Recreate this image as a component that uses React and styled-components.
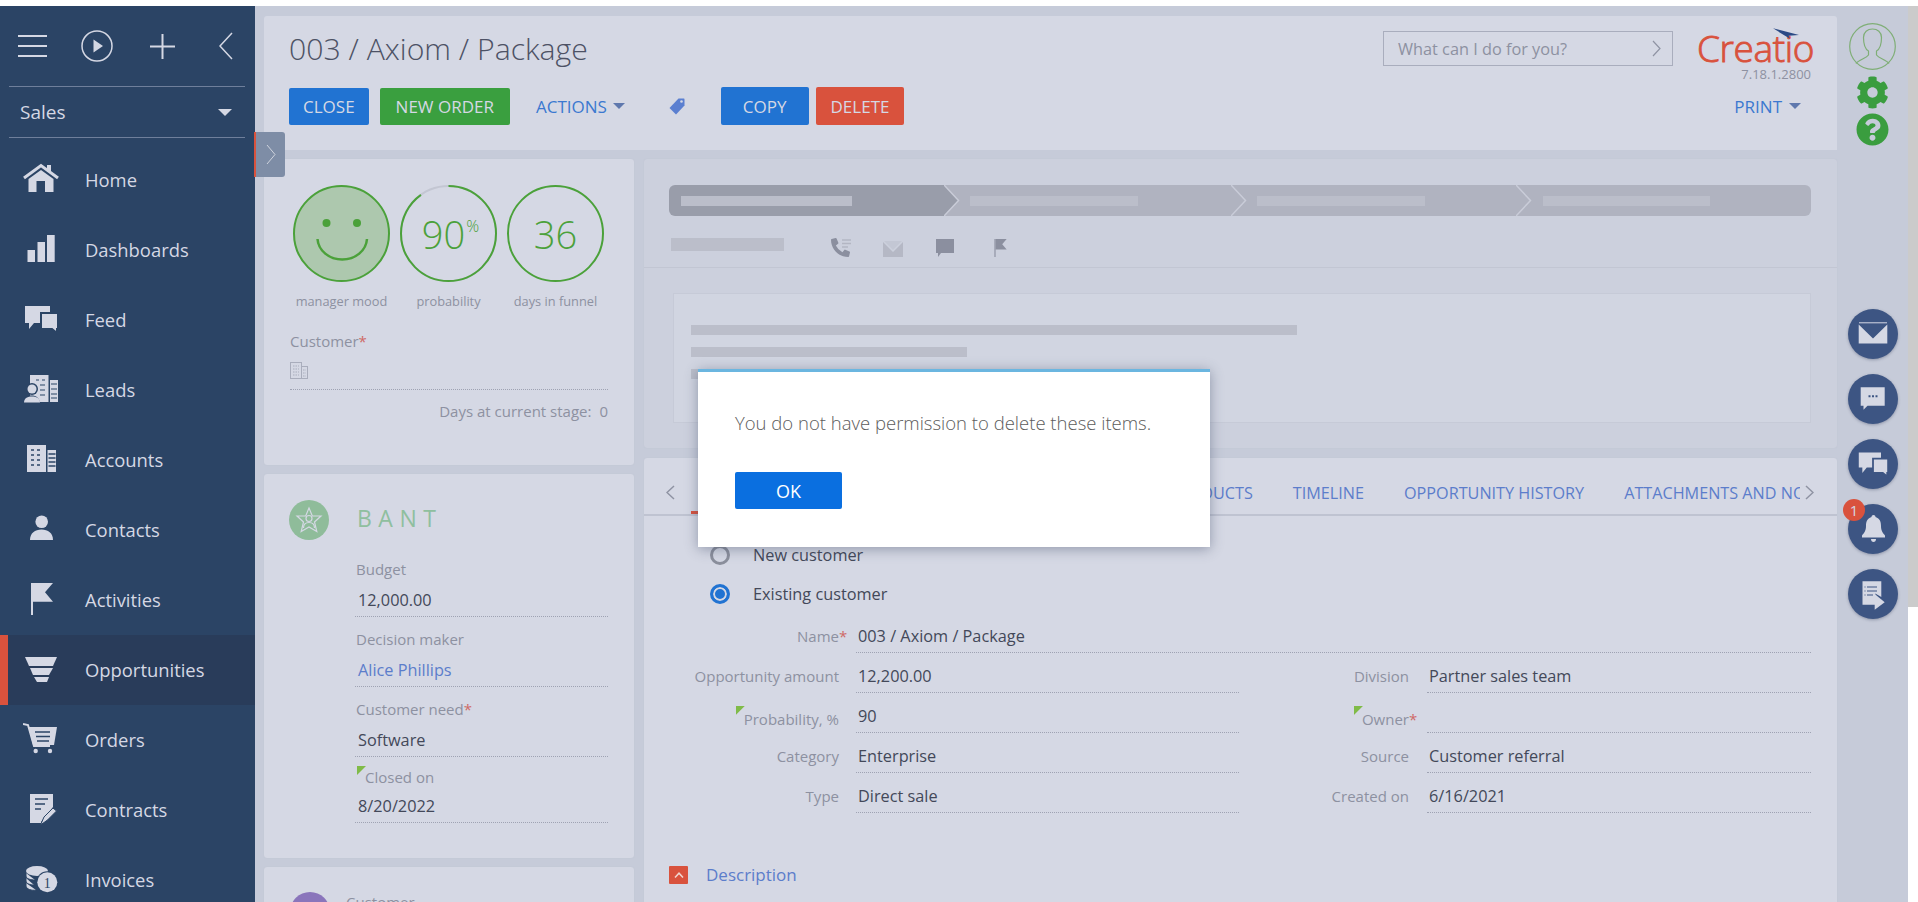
import React from "react";
import styled, { createGlobalStyle } from "styled-components";
import { FaCog, FaQuestionCircle, FaPhoneAlt } from "react-icons/fa";

const GlobalStyle = createGlobalStyle`
  html, body { margin: 0; padding: 0; background: #fff; }
  body { font-family: "Open Sans", sans-serif; }
  * { box-sizing: border-box; }
`;

const panel = "#d5d8e4";
const strip = "#c6cbd9";
const navy = "#2b4465";
const red = "#d9523d";
const green = "#4ba13a";
const link = "#5c7dcb";
const muted = "#8d91a1";
const ink = "#434859";
const railBlue = "#3d5583";

const Stage = styled.div`
  width: 1918px;
  height: 902px;
  padding-top: 6px;
  display: flex;
  align-items: flex-start;
  overflow: hidden;
  position: relative;
  background: #fff;
`;

/* left menu */
const Sidebar = styled.aside`
  width: 255px;
  height: 896px;
  flex: none;
  background: ${navy};
  overflow: hidden;
`;
const SideTools = styled.div`
  height: 80px;
  padding-left: 18px;
  display: flex;
  align-items: center;
  svg { flex: none; }
`;
const ToolSlot = styled.span`
  display: flex;
  margin-left: ${(p) => p.$ml}px;
`;
const SideSelect = styled.div`
  height: 52px;
  margin: 0 10px 0 9px;
  padding: 0 13px 0 11px;
  border-top: 1px solid #6f7f9b;
  border-bottom: 1px solid #6f7f9b;
  display: flex;
  align-items: center;
  justify-content: space-between;
  color: ${panel};
  font-size: 19px;
`;
const Caret = styled.span`
  width: 0;
  height: 0;
  margin-left: ${(p) => p.$gap || 0}px;
  border-left: ${(p) => p.$size || 6}px solid transparent;
  border-right: ${(p) => p.$size || 6}px solid transparent;
  border-top: ${(p) => p.$size || 6}px solid ${(p) => p.$color || "#5f78ad"};
`;
const Nav = styled.nav`
  margin-top: 7px;
`;
const NavRow = styled.div`
  height: 70px;
  padding: 0 0 2px 23px;
  display: flex;
  align-items: center;
  gap: 26px;
  color: ${panel};
  font-size: 18.4px;
  background: ${(p) => (p.$active ? "#293c5a" : "transparent")};
  box-shadow: ${(p) => (p.$active ? `inset 8px 0 0 ${red}` : "none")};
  svg { flex: none; }
`;
const CollapseTab = styled.div`
  position: absolute;
  left: 254px;
  top: 132px;
  width: 31px;
  height: 45px;
  background: #7e8da6;
  border-left: 2px solid ${red};
  border-radius: 0 3px 3px 0;
  display: flex;
  align-items: center;
  justify-content: center;
`;

/* main part */
const Content = styled.div`
  flex: 1;
  height: 896px;
  display: flex;
  background: ${strip};
  overflow: hidden;
`;
const ScrollStrip = styled.div`
  width: 10px;
  height: 601px;
  flex: none;
  background: #cbcbcb;
`;
const Work = styled.main`
  flex: 1;
  padding: 10px 0 0 9px;
  display: flex;
  flex-direction: column;
  gap: 9px;
  min-width: 0;
`;
const HeaderPanel = styled.header`
  height: 134px;
  flex: none;
  padding: 0 26px 0 25px;
  background: ${panel};
  border-radius: 3px 3px 0 0;
`;
const TopRow = styled.div`
  height: 71px;
  display: flex;
  align-items: flex-start;
`;
const Title = styled.h1`
  margin: 15px auto 0 0;
  font-size: 30.2px;
  font-weight: 300;
  line-height: 36px;
  color: #4d5265;
`;
const Search = styled.div`
  width: 290px;
  height: 35px;
  margin-top: 15px;
  padding: 0 11px 0 14px;
  border: 1px solid #a9adbd;
  display: flex;
  align-items: center;
  justify-content: space-between;
  color: ${muted};
  font-size: 16.3px;
`;
const LogoBlock = styled.div`
  width: 112px;
  margin-left: 26px;
  position: relative;
  text-align: right;
`;
const LogoWord = styled.div`
  margin: 14px 0 0 -2px;
  height: 36px;
  font-size: 37px;
  font-weight: 300;
  line-height: 36px;
  letter-spacing: -0.4px;
  color: ${red};
  text-align: left;
  white-space: nowrap;
  -webkit-text-stroke: 0.9px ${red};
`;
const LogoArrow = styled.svg`
  position: absolute;
  left: 74px;
  top: 12px;
`;
const Version = styled.div`
  font-size: 13px;
  line-height: 16px;
  color: ${muted};
`;
const Toolbar = styled.div`
  display: flex;
  align-items: center;
`;
const Btn = styled.button`
  height: ${(p) => p.$h || 37}px;
  margin-left: ${(p) => p.$ml || 0}px;
  padding: 0 ${(p) => p.$pad || 14}px;
  border: 0;
  border-radius: 2px;
  background: ${(p) => p.$bg};
  color: ${panel};
  font: 17px "Open Sans", sans-serif;
`;
const TextMenu = styled.div`
  margin-left: ${(p) => (p.$end ? "auto" : `${p.$ml}px`)};
  margin-right: ${(p) => (p.$end ? 10 : 0)}px;
  display: flex;
  align-items: center;
  color: #3b78d0;
  font-size: 17px;
`;
const TagSlot = styled.div`
  height: 17px;
  margin: 0 36px 0 44px;
`;

const Columns = styled.div`
  flex: 1;
  display: grid;
  grid-template-columns: 370px 1fr;
  column-gap: 10px;
  min-height: 0;
`;
const Stack = styled.div`
  display: flex;
  flex-direction: column;
  gap: ${(p) => p.$gap}px;
  min-width: 0;
`;
const Card = styled.section`
  flex: ${(p) => (p.$h ? "none" : 1)};
  height: ${(p) => (p.$h ? `${p.$h}px` : "auto")};
  padding: ${(p) => p.$pad || 0};
  background: ${(p) => p.$bg || panel};
  border-radius: 3px;
  box-shadow: 0 0 1px #b9bdcb;
`;

/* gauges */
const Gauges = styled.div`
  margin: 0 0 22px 3px;
  display: flex;
  gap: 10px;
`;
const Gauge = styled.div`
  width: 97px;
  text-align: center;
  font-size: 12.8px;
  line-height: 16px;
  color: ${muted};
  white-space: nowrap;
`;
const Ring = styled.div`
  width: 97px;
  height: 97px;
  margin-bottom: 11px;
  position: relative;
  display: flex;
  align-items: center;
  justify-content: center;
  svg { position: absolute; left: 0; top: 0; }
`;
const Num = styled.span`
  position: relative;
  margin-right: ${(p) => p.$shift || 0}px;
  font-size: 38px;
  font-weight: 300;
  line-height: 1;
  color: ${green};
  sup {
    position: absolute;
    left: 100%;
    top: 3px;
    margin-left: 1px;
    font-size: 16px;
    line-height: 1;
  }
`;
const Label = styled.div`
  font-size: 15px;
  line-height: 20px;
  color: ${muted};
  white-space: nowrap;
`;
const Star = styled.span`
  color: #cf6a66;
`;
const Lookup = styled.div`
  height: 28px;
  margin-top: 11px;
  border-bottom: 1px dotted #9fa3b3;
`;
const DaysRow = styled.div`
  margin-top: 11px;
  display: flex;
  justify-content: flex-end;
  gap: 8px;
  font-size: 15px;
  line-height: 20px;
  color: ${muted};
`;

/* bant */
const BantHead = styled.div`
  display: flex;
  align-items: center;
  gap: 28px;
`;
const Badge = styled.div`
  width: 40px;
  height: 40px;
  flex: none;
  border-radius: 50%;
  background: ${(p) => p.$bg};
  display: flex;
  align-items: center;
  justify-content: center;
`;
const BantTitle = styled.div`
  margin-bottom: 4px;
  font-size: 23px;
  font-weight: 400;
  letter-spacing: 6.5px;
  color: #8fbf9f;
`;
const BantFields = styled.div`
  margin: 7px 0 0 66px;
`;
const Field = styled.div`
  padding: ${(p) => (p.$tight ? 10 : 12)}px 0 5px 1px;
  border-bottom: 1px dotted #9fa3b3;
`;
const FieldValue = styled.div`
  margin-top: ${(p) => (p.$tight ? 8 : 10)}px;
  padding-left: 2px;
  font-size: 16.3px;
  line-height: 22px;
  color: ${(p) => (p.$link ? link : ink)};
`;
const Marked = styled.span`
  position: relative;
  margin-left: ${(p) => p.$ml || 0}px;
  top: ${(p) => p.$top || 0}px;
`;
const Corner = styled.i`
  position: absolute;
  right: 100%;
  top: ${(p) => p.$top}px;
  margin-right: -1px;
  width: 9px;
  height: 9px;
  background: #80bb48;
  clip-path: polygon(0 0, 100% 0, 0 100%);
`;
const OwnerRow = styled.div`
  display: flex;
  gap: 16px;
`;

/* stage card */
const Stepper = styled.div`
  height: 31px;
  margin: 0 25px;
  display: flex;
`;
const Step = styled.div`
  width: ${(p) => p.$w}px;
  flex: none;
  position: relative;
  padding: 11px 0 0 ${(p) => p.$pad}px;
  background: ${(p) => (p.$on ? "#999daa" : "#b0b3c0")};
  border-radius: ${(p) => p.$radius || 0};
  svg { position: absolute; left: 100%; top: 0; z-index: 1; }
`;
const Skeleton = styled.div`
  width: ${(p) => p.$w}px;
  height: ${(p) => p.$h || 10}px;
  flex: none;
  background: #bbbeca;
`;
const SubRow = styled.div`
  height: 52px;
  padding: 22px 0 0 27px;
  display: flex;
  border-bottom: 1px solid #c2c6d3;
`;
const ActIcon = styled.div`
  width: ${(p) => p.$w}px;
  margin-left: ${(p) => p.$ml || 0}px;
  flex: none;
  position: relative;
  color: #8b8f9f;
`;
const NoteBox = styled.div`
  height: 130px;
  margin: 25px 26px 0 29px;
  padding: 31px 17px;
  display: flex;
  flex-direction: column;
  gap: 12px;
  background: #d1d5e1;
  border: 1px solid #c6cad7;
`;

/* tabs */
const TabBar = styled.div`
  height: 58px;
  padding-top: 13px;
  display: flex;
  align-items: stretch;
  border-bottom: 2px solid #bfc3d1;
`;
const TabArrow = styled.div`
  width: ${(p) => p.$w}px;
  flex: none;
  padding-left: ${(p) => p.$pl}px;
  display: flex;
  align-items: center;
`;
const TabStrip = styled.div`
  flex: 1;
  min-width: 0;
  display: flex;
  gap: 40px;
  overflow: hidden;
`;
const Tab = styled.div`
  width: ${(p) => (p.$w ? `${p.$w}px` : "auto")};
  flex: none;
  display: flex;
  align-items: center;
  border-bottom: ${(p) => (p.$on ? `3px solid ${red}` : "0")};
  font-size: 16.2px;
  color: ${link};
  white-space: nowrap;
`;
const Radios = styled.div`
  padding: 19px 0 0 66px;
`;
const RadioRow = styled.div`
  height: 39px;
  display: flex;
  align-items: center;
  gap: 23px;
  font-size: 16.3px;
  color: ${ink};
`;
const RadioDot = styled.span`
  width: 20px;
  height: 20px;
  border-radius: 50%;
  border: 3px solid ${(p) => (p.$on ? "#2173d2" : "#8b8f9c")};
  box-shadow: inset 0 0 0 2px ${panel};
  background: ${(p) => (p.$on ? "#2173d2" : "transparent")};
`;
const FormGrid = styled.div`
  display: grid;
  grid-template-columns: 595px 572px;
`;
const Pair = styled.div`
  height: 40px;
  display: grid;
  grid-template-columns: ${(p) => (p.$side ? "170px 1fr" : "195px 1fr")};
  column-gap: ${(p) => (p.$side ? 18 : 17)}px;
  grid-column: ${(p) => (p.$wide ? "1 / -1" : "auto")};
`;
const PairLabel = styled.div`
  padding-top: 12px;
  font-size: 15px;
  line-height: 22px;
  text-align: right;
  color: ${muted};
  position: relative;
  white-space: nowrap;
`;
const LabelStar = styled(Star)`
  position: absolute;
  left: 100%;
`;
const PairValue = styled.div`
  padding: 12px 0 5px 2px;
  border-bottom: 1px dotted #9fa3b3;
  font-size: 16.3px;
  line-height: 22px;
  color: ${ink};
`;
const GroupHead = styled.div`
  margin: 50px 0 0 25px;
  display: flex;
  align-items: center;
  gap: 18px;
  color: ${link};
  font-size: 17px;
`;
const GroupToggle = styled.span`
  width: 19px;
  height: 18px;
  background: ${red};
  border-radius: 1px;
  display: flex;
  align-items: center;
  justify-content: center;
`;

/* right rail */
const Rail = styled.div`
  width: 71px;
  flex: none;
  padding-top: 17px;
  display: flex;
  flex-direction: column;
  align-items: center;
  color: #3a9d3f;
`;
const RailTool = styled.div`
  height: 31px;
  margin-top: ${(p) => p.$mt}px;
  display: flex;
  align-items: center;
`;
const FloatGroup = styled.div`
  margin: 164px 0 0 1px;
  display: flex;
  flex-direction: column;
  gap: 15px;
`;
const FloatBtn = styled.div`
  width: 50px;
  height: 50px;
  border-radius: 50%;
  background: ${railBlue};
  box-shadow: 0 1px 3px rgba(40, 50, 80, 0.35);
  position: relative;
  display: flex;
  align-items: center;
  justify-content: center;
`;
const Counter = styled.span`
  position: absolute;
  left: -5px;
  top: -5px;
  width: 22px;
  height: 22px;
  border-radius: 50%;
  background: ${red};
  color: ${panel};
  font-size: 15px;
  line-height: 22px;
  text-align: center;
`;

/* dialog */
const Dialog = styled.div`
  position: absolute;
  left: 698px;
  top: 369px;
  width: 512px;
  height: 178px;
  padding: 41px 37px 0;
  background: #fff;
  border-top: 3px solid #6bb6e0;
  box-shadow: 0 2px 12px rgba(60, 70, 100, 0.45);
  color: #5c5c5c;
  font-size: 18.5px;
  font-weight: 300;
  line-height: 20px;
  white-space: nowrap;
`;
const OkBtn = styled.button`
  display: block;
  width: 107px;
  height: 37px;
  margin-top: 39px;
  border: 0;
  border-radius: 2px;
  background: #0a6fe0;
  color: #fff;
  font: 18px "Open Sans", sans-serif;
`;

/* drawings */
const light = panel;
const dark = navy;

const HomeIcon = () => (
  <svg width="36" height="36" viewBox="0 0 36 36" fill={light}>
    <path d="M1 17 18 4.500 35 17" fill="none" stroke={light} strokeWidth="3" />
    <rect x="24" y="4" width="4" height="7" />
    <path d="M5.500 18 18 9l12.500 9v13H22V20h-8.500v11H5.500z" />
  </svg>
);
const BarsIcon = () => (
  <svg width="36" height="36" viewBox="0 0 36 36" fill={light}>
    <rect x="4.500" y="19" width="7.500" height="12" />
    <rect x="14.500" y="11" width="7.500" height="20" />
    <rect x="24" y="4" width="7.700" height="27" />
  </svg>
);
const FeedIcon = ({ size = 36, bg = dark }) => (
  <svg width={size} height={size} viewBox="0 0 36 36" fill={light}>
    <path d="M2 5h25v17H11l-5 6v-6H2z" />
    <path d="M18 12h17v16h-1v4l-5-4H18z" stroke={bg} strokeWidth="2" />
  </svg>
);
const LeadsIcon = () => (
  <svg width="36" height="36" viewBox="0 0 36 36" fill={light}>
    <rect x="7" y="4" width="18.500" height="27" />
    <rect x="27" y="9" width="8" height="22" />
    <path d="M13 9h3M19 9h3M17 14h5M17 19h5M17 24h5M28 13h6M28 18h6M28 23h6M28 27h6" stroke={dark} strokeWidth="1.200" />
    <circle cx="9" cy="18" r="6" fill={dark} />
    <path d="M0 33C0 27 4 24.500 8.500 24.500S17 27 17 33z" fill={dark} />
    <circle cx="9" cy="18" r="4.500" />
    <path d="M1 31.500C1 27 5 25.500 9 25.500S17 27 17 31.500z" />
  </svg>
);
const AccountsIcon = () => (
  <svg width="36" height="36" viewBox="0 0 36 36" fill={light}>
    <rect x="4" y="4" width="19" height="27" />
    <rect x="24.500" y="9" width="8.500" height="22" />
    <path d="M8 9h3M14 9h3M8 14h3M14 14h3M8 19h3M14 19h3M8 24h3M14 24h3M25.500 13h7M25.500 17h7M25.500 21h7M25.500 25h7" stroke={dark} strokeWidth="1.300" />
  </svg>
);
const PersonIcon = () => (
  <svg width="36" height="36" viewBox="0 0 36 36" fill={light}>
    <circle cx="18.700" cy="10.700" r="6.300" />
    <path d="M7 29C7 22 12 18.500 18.500 18.500S30 22 30 29z" />
  </svg>
);
const FlagIcon = ({ size = 36, color = light }) => (
  <svg width={size} height={size} viewBox="0 0 36 36" fill={color}>
    <path d="M8 2h2v32H8z" />
    <path d="M10 2h20l-8 9.300 8 9.400H10z" />
  </svg>
);
const FunnelIcon = () => (
  <svg width="36" height="36" viewBox="0 0 36 36" fill={light}>
    <path d="M2 6h32l-4 9H6z" />
    <path d="M7 17h23l-4 7H10z" />
    <path d="M11 26h15l-2 5H14z" />
  </svg>
);
const CartIcon = () => (
  <svg width="36" height="36" viewBox="0 0 36 36" fill={light}>
    <path d="M0 3 5 4 11 25h16" fill="none" stroke={light} strokeWidth="2" />
    <path d="M5.500 6H34l-3 18H10z" />
    <path d="M12 11h15M13 15.500h14M14 20h12" stroke={dark} strokeWidth="1.600" />
    <circle cx="12.700" cy="30" r="2.200" />
    <circle cx="27" cy="30" r="2.200" />
  </svg>
);
const ContractIcon = () => (
  <svg width="36" height="36" viewBox="0 0 36 36" fill={light}>
    <path d="M7 3h23v13L18 31v1H7z" />
    <path d="M12 8h13M12 13h10M12 18h6" stroke={dark} strokeWidth="1.500" />
    <path d="M17.500 34 21 26 30 17l3.500 3-9 9z" stroke={dark} strokeWidth="1" />
  </svg>
);
const CoinsIcon = () => (
  <svg width="36" height="36" viewBox="0 0 36 36">
    <ellipse cx="14" cy="10" rx="11" ry="5" fill={light} />
    <path d="M3 12v3c0 3 5 4 9 4M3 17v3c0 3 5 4 8 4M3 22v3c0 3 6 5 10 4" fill={light} stroke={dark} strokeWidth="1" />
    <circle cx="24.300" cy="21.300" r="11" fill={dark} />
    <circle cx="24.300" cy="21.300" r="10" fill={light} />
    <text x="24.300" y="26.500" textAnchor="middle" fontFamily="Liberation Serif, serif" fontSize="14" fill={dark}>1</text>
  </svg>
);
const Chevron = ({ dir = "left", w = 14, h = 28, color = light, sw = 1.500 }) => (
  <svg width={w} height={h} viewBox={`0 0 ${w} ${h}`} fill="none" stroke={color} strokeWidth={sw}>
    <path d={dir === "left" ? `M${w - 1} 1 1 ${h / 2} ${w - 1} ${h - 1}` : `M1 1 ${w - 1} ${h / 2} 1 ${h - 1}`} />
  </svg>
);
const BuildingIcon = () => (
  <svg width="18" height="17" viewBox="0 0 18 17" fill="none" stroke="#a9adbc">
    <rect x="0.500" y="0.500" width="11" height="16" />
    <rect x="11.500" y="4.500" width="6" height="12" />
    <path d="M3 4h6M3 7h6M3 10h6M3 13h6M13 8h3M13 11h3M13 14h3" strokeDasharray="1.500 1" />
  </svg>
);
const TagIcon = () => (
  <svg width="16" height="17" viewBox="0 0 16 17">
    <path d="M9.500 0.500h5c.8 0 1 .5 1 1v6L7 16.500.500 10z" fill="#5b7fd0" />
    <circle cx="12.500" cy="3.500" r="1.300" fill={panel} />
  </svg>
);
const StepTip = ({ color }) => (
  <svg width="16" height="31" viewBox="0 0 16 31">
    <path d="M0 0 14.500 15.500 0 31z" fill={color} />
    <path d="M0 0 14.500 15.500 0 31" fill="none" stroke="#c9ccd8" strokeWidth="1.500" />
  </svg>
);
const Avatar = () => (
  <svg width="47" height="47" viewBox="0 0 47 47" fill="none" stroke="#7fae76" strokeWidth="1.200">
    <circle cx="23.500" cy="23.500" r="22.800" />
    <path d="M7 40.500c3-4 10-5 12.500-8.500v-4c-3.500-2-5-7-5-13.500 0-5.500 4-8.500 9-8.500s9 3 9 8.500c0 6.500-1.500 11.500-5 13.500v4c2.500 3.500 9.500 4.500 12.500 8.500" />
  </svg>
);
const MailGlyph = () => (
  <svg width="50" height="50" viewBox="0 0 50 50" fill={light}>
    <path d="M10.700 15.500 25 29.500l14.300-14v19H10.700z" />
    <path d="M11 13.800h28" stroke={light} strokeWidth="1" />
  </svg>
);
const ChatGlyph = () => (
  <svg width="50" height="50" viewBox="0 0 50 50" fill={light}>
    <path d="M12.700 13.300h24v18.400H19.500l-4 4v-4h-2.800z" />
    <path d="M20.500 22.300h2M24 22.300h2M27.500 22.300h2" stroke={railBlue} strokeWidth="2" />
  </svg>
);
const BellGlyph = () => (
  <svg width="50" height="50" viewBox="0 0 50 50" fill={light}>
    <path d="M25.500 11c1.500 0 2 1 2 2 4.500 1.500 5.500 5 5.500 9 0 5 2 7 4 9.500v2H14v-2c2-2.500 4-4.500 4-9.500 0-4 1-7.500 5.500-9 0-1 .5-2 2-2z" />
    <path d="M23 35h5c0 2-1 3-2.500 3s-2.500-1-2.500-3z" />
  </svg>
);
const ReportGlyph = () => (
  <svg width="50" height="50" viewBox="0 0 50 50" fill={light}>
    <path d="M14.500 12.300h18.800V28l-6-3.500v11.200H14.500z" />
    <path d="M19 18h10M19 22h10M19 26h6M16.500 18h1M16.500 22h1M16.500 26h1" stroke={railBlue} strokeWidth="1" />
    <path d="M26.700 25 36.700 33.300 26.700 40.700z" />
  </svg>
);

const menu = [
  ["Home", HomeIcon],
  ["Dashboards", BarsIcon],
  ["Feed", FeedIcon],
  ["Leads", LeadsIcon],
  ["Accounts", AccountsIcon],
  ["Contacts", PersonIcon],
  ["Activities", FlagIcon],
  ["Opportunities", FunnelIcon, true],
  ["Orders", CartIcon],
  ["Contracts", ContractIcon],
  ["Invoices", CoinsIcon],
];

const steps = [
  { w: 275, pad: 12, bar: 171, on: true, radius: "6px 0 0 6px" },
  { w: 287, pad: 26, bar: 168 },
  { w: 285, pad: 26, bar: 168 },
  { w: 295, pad: 27, bar: 167, radius: "0 6px 6px 0", last: true },
];

const details = [
  { label: "Opportunity amount", value: "12,200.00", side: "Division", sideValue: "Partner sales team" },
  { label: "Probability, %", value: "90", side: "Owner", sideValue: "", marked: true },
  { label: "Category", value: "Enterprise", side: "Source", sideValue: "Customer referral" },
  { label: "Type", value: "Direct sale", side: "Created on", sideValue: "6/16/2021" },
];

function PercentRing() {
  return (
    <svg width="97" height="97" viewBox="0 0 97 97" fill="none" strokeWidth="2">
      <circle cx="48.500" cy="48.500" r="47.500" stroke="#c3c6d2" />
      <circle cx="48.500" cy="48.500" r="47.500" stroke={green} strokeDasharray="268.600 298.500" transform="rotate(-90 48.500 48.500)" />
    </svg>
  );
}

export default function App() {
  return (
    <Stage>
      <GlobalStyle />
      <Sidebar>
        <SideTools>
          <svg width="29" height="22" viewBox="0 0 29 22" fill={light}>
            <rect width="29" height="2" />
            <rect y="10" width="29" height="2" />
            <rect y="20" width="29" height="2" />
          </svg>
          <ToolSlot $ml={34}>
            <svg width="32" height="32" viewBox="0 0 32 32">
              <circle cx="16" cy="16" r="15" fill="none" stroke={light} strokeWidth="1.500" />
              <path d="M12.500 9.500 22 16l-9.500 6.500z" fill={light} />
            </svg>
          </ToolSlot>
          <ToolSlot $ml={37}>
            <svg width="25" height="25" viewBox="0 0 25 25" fill={light}>
              <rect x="11.500" width="2" height="25" />
              <rect y="11.500" width="25" height="2" />
            </svg>
          </ToolSlot>
          <ToolSlot $ml={44}>
            <Chevron />
          </ToolSlot>
        </SideTools>
        <SideSelect>
          Sales
          <Caret $size={7} $color={light} />
        </SideSelect>
        <Nav>
          {menu.map(([name, Icon, active]) => (
            <NavRow key={name} $active={active}>
              <Icon />
              {name}
            </NavRow>
          ))}
        </Nav>
      </Sidebar>
      <CollapseTab>
        <Chevron dir="right" w={10} h={21} color="#cfd4de" sw={1} />
      </CollapseTab>

      <Content>
        <Work>
          <HeaderPanel>
            <TopRow>
              <Title>003 / Axiom / Package</Title>
              <Search>
                What can I do for you?
                <Chevron dir="right" w={9} h={17} color="#8f93a3" sw={1.200} />
              </Search>
              <LogoBlock>
                <LogoWord>Creatio</LogoWord>
                <LogoArrow width="26" height="11" viewBox="0 0 26 11">
                  <path d="M0 .3 26 7l-10.500 .8 1.500 3z" fill="#2b4a85" />
                </LogoArrow>
                <Version>7.18.1.2800</Version>
              </LogoBlock>
            </TopRow>
            <Toolbar>
              <Btn $bg="#2173d2">CLOSE</Btn>
              <Btn $bg="#3a9f3f" $ml={11} $pad={16}>NEW ORDER</Btn>
              <TextMenu $ml={26}>
                ACTIONS
                <Caret $gap={6} />
              </TextMenu>
              <TagSlot>
                <TagIcon />
              </TagSlot>
              <Btn $bg="#2173d2" $h={38} $pad={22}>COPY</Btn>
              <Btn $bg={red} $h={38} $ml={7} $pad={15}>DELETE</Btn>
              <TextMenu $end>
                PRINT
                <Caret $gap={7} />
              </TextMenu>
            </Toolbar>
          </HeaderPanel>

          <Columns>
            <Stack $gap={9}>
              <Card $h={306} $pad="26px 26px 0">
                <Gauges>
                  <Gauge>
                    <Ring>
                      <svg width="97" height="97" viewBox="0 0 97 97">
                        <circle cx="48.500" cy="48.500" r="47.500" fill="#adc8ae" stroke={green} strokeWidth="2" />
                        <circle cx="33.500" cy="38" r="4" fill={green} />
                        <circle cx="64" cy="38" r="4" fill={green} />
                        <path d="M24.500 54a24.800 22 0 0 0 49.500 0" fill="none" stroke={green} strokeWidth="2.500" />
                      </svg>
                    </Ring>
                    manager mood
                  </Gauge>
                  <Gauge>
                    <Ring>
                      <PercentRing />
                      <Num $shift={10}>90<sup>%</sup></Num>
                    </Ring>
                    probability
                  </Gauge>
                  <Gauge>
                    <Ring>
                      <svg width="97" height="97" viewBox="0 0 97 97">
                        <circle cx="48.500" cy="48.500" r="47.500" fill="none" stroke={green} strokeWidth="2" />
                      </svg>
                      <Num>36</Num>
                    </Ring>
                    days in funnel
                  </Gauge>
                </Gauges>
                <Label>
                  Customer<Star>*</Star>
                </Label>
                <Lookup>
                  <BuildingIcon />
                </Lookup>
                <DaysRow>
                  <span>Days at current stage:</span>
                  <span>0</span>
                </DaysRow>
              </Card>

              <Card $h={384} $pad="26px 26px 0 25px">
                <BantHead>
                  <Badge $bg="#8fbc9a">
                    <svg width="28" height="28" viewBox="0 0 28 28" fill="none" stroke="#d5d8e4" strokeWidth="1.200">
                      <path d="M14 2l3.300 8H26l-6.500 6 2.300 9.500L14 21l-7.800 4.500L8.500 16 2 10h8.700z" />
                      <circle cx="14" cy="12.500" r="3" />
                      <path d="M8.500 22c0-4 2.500-5.500 5.500-5.500s5.500 1.500 5.500 5.500" />
                    </svg>
                  </Badge>
                  <BantTitle>BANT</BantTitle>
                </BantHead>
                <BantFields>
                  <Field>
                    <Label>Budget</Label>
                    <FieldValue>12,000.00</FieldValue>
                  </Field>
                  <Field>
                    <Label>Decision maker</Label>
                    <FieldValue $link>Alice Phillips</FieldValue>
                  </Field>
                  <Field>
                    <Label>
                      Customer need<Star>*</Star>
                    </Label>
                    <FieldValue>Software</FieldValue>
                  </Field>
                  <Field $tight>
                    <Label>
                      <Marked $ml={9}>
                        <Corner $top={-1} />
                        Closed on
                      </Marked>
                    </Label>
                    <FieldValue $tight>8/20/2022</FieldValue>
                  </Field>
                </BantFields>
              </Card>

              <Card $pad="25px 26px 0">
                <OwnerRow>
                  <Badge $bg="#8a75bb" />
                  <Label>Customer</Label>
                </OwnerRow>
              </Card>
            </Stack>

            <Stack $gap={10}>
              <Card $h={289} $pad="26px 0 0" $bg="#ccd0dd">
                <Stepper>
                  {steps.map((s, i) => (
                    <Step key={i} $w={s.w} $pad={s.pad} $on={s.on} $radius={s.radius}>
                      <Skeleton $w={s.bar} />
                      {!s.last && <StepTip color={s.on ? "#999daa" : "#b0b3c0"} />}
                    </Step>
                  ))}
                </Stepper>
                <SubRow>
                  <Skeleton $w={113} $h={13} />
                  <ActIcon $w={52} $ml={47}>
                    <FaPhoneAlt size={19} />
                    <svg width="21" height="21" viewBox="0 0 21 21" style={{ position: "absolute", left: 0, top: 0 }}>
                      <path d="M11 2h9M11 5.500h9M11 9h6" stroke="#b3b6c3" strokeWidth="1.300" />
                    </svg>
                  </ActIcon>
                  <ActIcon $w={53}>
                    <svg width="20" height="16" viewBox="0 0 20 16" style={{ marginTop: 3 }}>
                      <path d="M0 1 10 11 20 1v15H0z" fill="#b5b8c5" />
                      <path d="M1 0h18l-9 9z" fill="#c3c7d4" />
                    </svg>
                  </ActIcon>
                  <ActIcon $w={54}>
                    <svg width="18" height="19" viewBox="0 0 18 19" fill="#8b8f9f" style={{ marginTop: 1 }}>
                      <path d="M0 0h18v14H5l-3 4v-4H0z" />
                    </svg>
                  </ActIcon>
                  <ActIcon $w={20}>
                    <FlagIcon size={20} color="#8b8f9f" />
                  </ActIcon>
                </SubRow>
                <NoteBox>
                  <Skeleton $w={606} />
                  <Skeleton $w={276} />
                  <Skeleton $w={200} />
                </NoteBox>
              </Card>

              <Card>
                <TabBar>
                  <TabArrow $w={47} $pl={22}>
                    <Chevron w={9} h={15} color="#8f93a3" sw={1.500} />
                  </TabArrow>
                  <TabStrip>
                    <Tab $w={438} $on />
                    <Tab>PRODUCTS</Tab>
                    <Tab>TIMELINE</Tab>
                    <Tab>OPPORTUNITY HISTORY</Tab>
                    <Tab>ATTACHMENTS AND NOTES</Tab>
                  </TabStrip>
                  <TabArrow $w={37} $pl={5}>
                    <Chevron dir="right" w={9} h={15} color="#8f93a3" sw={1.500} />
                  </TabArrow>
                </TabBar>
                <Radios>
                  <RadioRow>
                    <RadioDot />
                    New customer
                  </RadioRow>
                  <RadioRow>
                    <RadioDot $on />
                    Existing customer
                  </RadioRow>
                </Radios>
                <FormGrid>
                  <Pair $wide>
                    <PairLabel>
                      Name<LabelStar>*</LabelStar>
                    </PairLabel>
                    <PairValue>003 / Axiom / Package</PairValue>
                  </Pair>
                  {details.map((d) => (
                    <React.Fragment key={d.label}>
                      <Pair>
                        <PairLabel>
                          {d.marked ? (
                            <Marked $top={3}>
                              <Corner $top={-3} />
                              {d.label}
                            </Marked>
                          ) : (
                            d.label
                          )}
                        </PairLabel>
                        <PairValue>{d.value}</PairValue>
                      </Pair>
                      <Pair $side>
                        <PairLabel>
                          {d.marked ? (
                            <Marked $top={3}>
                              <Corner $top={-3} />
                              {d.side}
                              <LabelStar>*</LabelStar>
                            </Marked>
                          ) : (
                            d.side
                          )}
                        </PairLabel>
                        <PairValue>{d.sideValue}</PairValue>
                      </Pair>
                    </React.Fragment>
                  ))}
                </FormGrid>
                <GroupHead>
                  <GroupToggle>
                    <svg width="10" height="6" viewBox="0 0 10 6" fill="none" stroke="#f0d5cf" strokeWidth="1.500">
                      <path d="M1 5.500 5 1.200l4 4.300" />
                    </svg>
                  </GroupToggle>
                  Description
                </GroupHead>
              </Card>
            </Stack>
          </Columns>
        </Work>

        <Rail>
          <Avatar />
          <RailTool $mt={7}>
            <FaCog size={33} />
          </RailTool>
          <RailTool $mt={6}>
            <FaQuestionCircle size={33} />
          </RailTool>
          <FloatGroup>
            <FloatBtn>
              <MailGlyph />
            </FloatBtn>
            <FloatBtn>
              <ChatGlyph />
            </FloatBtn>
            <FloatBtn>
              <FeedIcon size={32} bg={railBlue} />
            </FloatBtn>
            <FloatBtn>
              <BellGlyph />
              <Counter>1</Counter>
            </FloatBtn>
            <FloatBtn>
              <ReportGlyph />
            </FloatBtn>
          </FloatGroup>
        </Rail>
      </Content>
      <ScrollStrip />

      <Dialog>
        You do not have permission to delete these items.
        <OkBtn>OK</OkBtn>
      </Dialog>
    </Stage>
  );
}
